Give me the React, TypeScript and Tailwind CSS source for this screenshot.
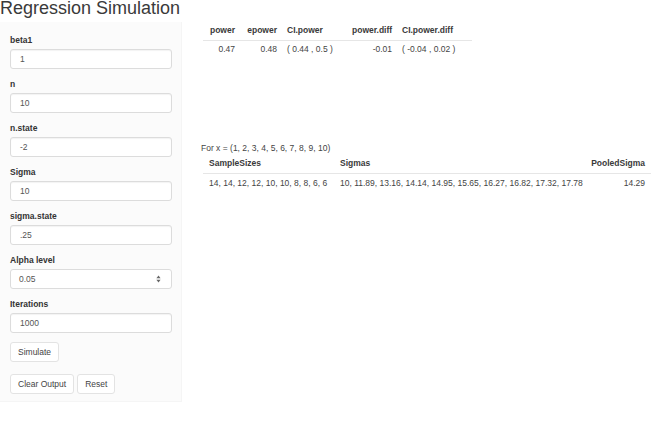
import React from 'react';

const fields = [
    { label: 'beta1', value: '1' },
    { label: 'n', value: '10' },
    { label: 'n.state', value: '-2' },
    { label: 'Sigma', value: '10' },
    { label: 'sigma.state', value: '.25' },
];

const Label = ({ children }: { children: React.ReactNode }) => (
    <div className="h-[12px] leading-[12px] mb-[3px] text-[8.5px] font-bold text-[#333]">{children}</div>
);

const TextInput = ({ value }: { value: string }) => (
    <div className="h-[20px] w-[162px] mb-[9px] flex items-center pl-[9px] bg-white border border-[#dcdcdc] rounded-[3px] shadow-[inset_0_1px_1px_rgba(0,0,0,0.05)] text-[8.5px] text-[#555]">
        {value}
    </div>
);

const Btn = ({ children }: { children: React.ReactNode }) => (
    <button className="h-[20px] px-[7px] bg-white border border-[#e3e3e3] rounded-[3px] text-[8.5px] text-[#444] leading-none">
        {children}
    </button>
);

const App: React.FC = () => {
    return (
        <div className="w-[665px] h-[424px] bg-white overflow-hidden" style={{ fontFamily: '"Liberation Sans", Arial, sans-serif' }}>
            {/* Title */}
            <h1 className="h-[22px] text-[18px] leading-[17px] text-[#3a3a3a] font-normal">Regression Simulation</h1>

            <div className="flex items-start">
                {/* Sidebar */}
                <div className="w-[182px] bg-[#fbfbfb] border-r border-b border-[#f5f5f5] pt-[12px] pb-[7px] pl-[10px]">
                    {fields.map((f) => (
                        <div key={f.label}>
                            <Label>{f.label}</Label>
                            <TextInput value={f.value} />
                        </div>
                    ))}

                    <Label>Alpha level</Label>
                    <div className="h-[20px] w-[162px] mb-[9px] flex items-center justify-between pl-[8px] pr-[10px] bg-white border border-[#dcdcdc] rounded-[3px] text-[8.5px] text-[#555]">
                        <span>0.05</span>
                        <svg width="5" height="8" viewBox="0 0 5 8">
                            <path d="M2.5 0.5 L4.6 3.2 L0.4 3.2 Z" fill="#666" />
                            <path d="M2.5 7.5 L4.6 4.8 L0.4 4.8 Z" fill="#666" />
                        </svg>
                    </div>

                    <Label>Iterations</Label>
                    <TextInput value="1000" />

                    <div className="flex mb-[12px]">
                        <Btn>Simulate</Btn>
                    </div>
                    <div className="flex gap-[3px]">
                        <Btn>Clear Output</Btn>
                        <Btn>Reset</Btn>
                    </div>
                </div>

                {/* Main panel */}
                <div className="ml-[19px] flex flex-col text-[8.5px] text-[#444]">
                    <table className="ml-[2px] table-fixed border-collapse w-[269px]">
                        <colgroup>
                            <col className="w-[37px]" />
                            <col className="w-[42px]" />
                            <col className="w-[65px]" />
                            <col className="w-[50px]" />
                            <col className="w-[75px]" />
                        </colgroup>
                        <thead>
                            <tr className="h-[18px] border-b border-[#e6e6e6] text-[#3a3a3a]">
                                <th className="px-[5px] text-right font-bold">power</th>
                                <th className="px-[5px] text-right font-bold">epower</th>
                                <th className="px-[5px] text-left font-bold">CI.power</th>
                                <th className="px-[5px] text-right font-bold">power.diff</th>
                                <th className="px-[5px] text-left font-bold">CI.power.diff</th>
                            </tr>
                        </thead>
                        <tbody>
                            <tr className="h-[19px]">
                                <td className="px-[5px] text-right">0.47</td>
                                <td className="px-[5px] text-right">0.48</td>
                                <td className="px-[5px] text-left whitespace-pre">( 0.44 , 0.5 )</td>
                                <td className="px-[5px] text-right">-0.01</td>
                                <td className="px-[5px] text-left whitespace-pre">( -0.04 , 0.02 )</td>
                            </tr>
                        </tbody>
                    </table>

                    <div className="mt-[83px] h-[12px] leading-[12px]">For x = (1, 2, 3, 4, 5, 6, 7, 8, 9, 10)</div>

                    <table className="ml-[2px] table-fixed border-collapse w-[448px]">
                        <colgroup>
                            <col className="w-[131px]" />
                            <col className="w-[247px]" />
                            <col className="w-[70px]" />
                        </colgroup>
                        <thead>
                            <tr className="h-[19px] border-b border-[#e6e6e6] text-[#3a3a3a]">
                                <th className="px-[6px] text-left font-bold">SampleSizes</th>
                                <th className="px-[6px] text-left font-bold">Sigmas</th>
                                <th className="px-[6px] text-right font-bold">PooledSigma</th>
                            </tr>
                        </thead>
                        <tbody>
                            <tr className="h-[20px]">
                                <td className="px-[6px] text-left whitespace-nowrap">14, 14, 12, 12, 10, 10, 8, 8, 6, 6</td>
                                <td className="px-[6px] text-left whitespace-nowrap">10, 11.89, 13.16, 14.14, 14.95, 15.65, 16.27, 16.82, 17.32, 17.78</td>
                                <td className="px-[6px] text-right">14.29</td>
                            </tr>
                        </tbody>
                    </table>
                </div>
            </div>
        </div>
    );
};

export default App;
